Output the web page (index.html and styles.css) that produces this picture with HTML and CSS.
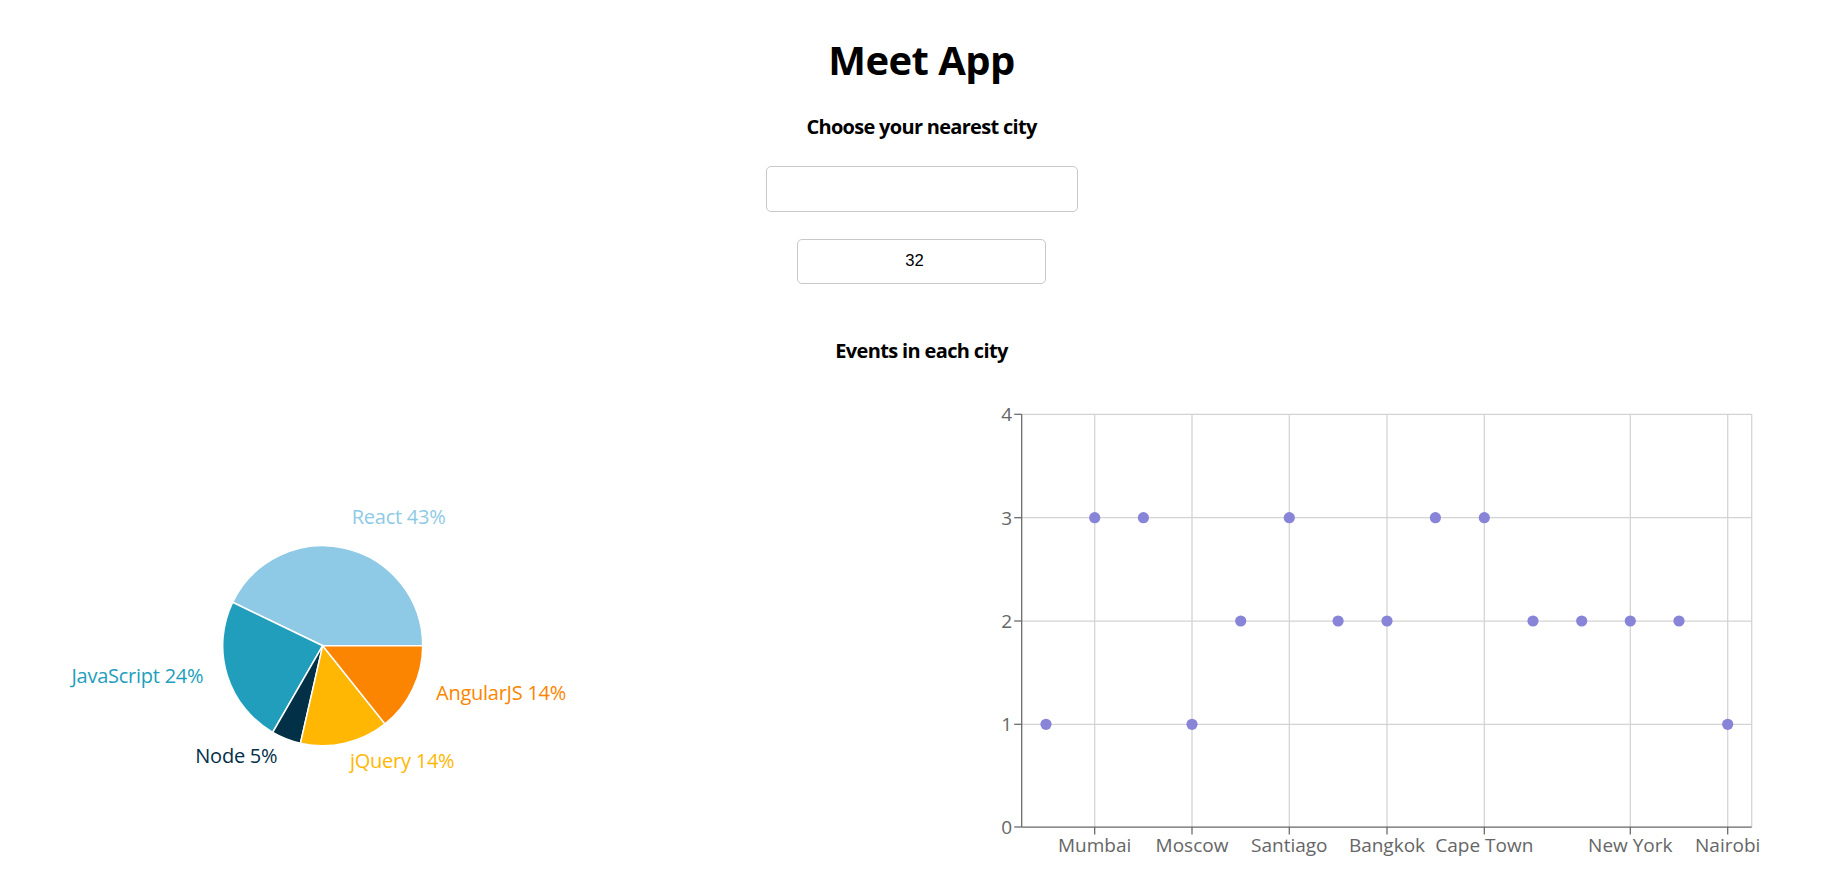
FILE: index.html
```html
<!DOCTYPE html>
<html lang="en">
<head>
<meta charset="utf-8">
<title>Meet App</title>
<link rel="stylesheet" href="styles.css">
</head>
<body>
<div class="app">
  <h1 class="title">Meet App</h1>
  <h4 class="label">Choose your nearest city</h4>
  <input class="city-input" type="text" aria-label="City">
  <input class="number-input" type="text" value="32" aria-label="Number of events">
  <h4 class="label events-label">Events in each city</h4>
</div>
<div class="charts">
  <div class="chart-cell">
    <svg class="chart" width="916" height="482" viewBox="0 394 916 482">
      <g class="pie" stroke="#fff" stroke-width="1.5">
        <path fill="#8ecae6" d="M322.7 645.7 L422.7 645.7 A100 100 0 0 0 232.6 602.3 Z"/>
        <path fill="#219ebc" d="M322.7 645.7 L232.6 602.3 A100 100 0 0 0 272.7 732.3 Z"/>
        <path fill="#023047" d="M322.7 645.7 L272.7 732.3 A100 100 0 0 0 300.45 743.2 Z"/>
        <path fill="#ffb703" d="M322.7 645.7 L300.45 743.2 A100 100 0 0 0 385.05 723.9 Z"/>
        <path fill="#fb8500" d="M322.7 645.7 L385.05 723.9 A100 100 0 0 0 422.7 645.7 Z"/>
      </g>
      <g class="pie-labels">
        <text x="351.7" y="524" fill="#8ecae6">React 43%</text>
        <text x="203.3" y="683.3" fill="#219ebc" text-anchor="end">JavaScript 24%</text>
        <text x="277.3" y="763.3" fill="#023047" text-anchor="end">Node 5%</text>
        <text x="350" y="768.3" fill="#ffb703">jQuery 14%</text>
        <text x="436" y="700" fill="#fb8500">AngularJS 14%</text>
      </g>
    </svg>
  </div>
  <div class="chart-cell">
    <svg class="chart" width="916" height="482" viewBox="916 394 916 482">
      <g class="grid" stroke="#d3d3d3" stroke-width="1.25">
        <line x1="1021.7" y1="414.3" x2="1751.7" y2="414.3"/>
        <line x1="1021.7" y1="517.7" x2="1751.7" y2="517.7"/>
        <line x1="1021.7" y1="621" x2="1751.7" y2="621"/>
        <line x1="1021.7" y1="724.3" x2="1751.7" y2="724.3"/>
        <line x1="1094.7" y1="414.3" x2="1094.7" y2="827"/>
        <line x1="1192" y1="414.3" x2="1192" y2="827"/>
        <line x1="1289.3" y1="414.3" x2="1289.3" y2="827"/>
        <line x1="1387" y1="414.3" x2="1387" y2="827"/>
        <line x1="1484.3" y1="414.3" x2="1484.3" y2="827"/>
        <line x1="1630.3" y1="414.3" x2="1630.3" y2="827"/>
        <line x1="1727.7" y1="414.3" x2="1727.7" y2="827"/>
        <line x1="1751.7" y1="414.3" x2="1751.7" y2="827"/>
      </g>
      <g class="axis" stroke="#666" stroke-width="1.25">
        <line x1="1021.7" y1="414.3" x2="1021.7" y2="827"/>
        <line x1="1021.7" y1="827" x2="1751.7" y2="827"/>
        <line x1="1014.2" y1="414.3" x2="1021.7" y2="414.3"/>
        <line x1="1014.2" y1="517.7" x2="1021.7" y2="517.7"/>
        <line x1="1014.2" y1="621" x2="1021.7" y2="621"/>
        <line x1="1014.2" y1="724.3" x2="1021.7" y2="724.3"/>
        <line x1="1014.2" y1="827" x2="1021.7" y2="827"/>
        <line x1="1094.7" y1="827" x2="1094.7" y2="834.5"/>
        <line x1="1192" y1="827" x2="1192" y2="834.5"/>
        <line x1="1289.3" y1="827" x2="1289.3" y2="834.5"/>
        <line x1="1387" y1="827" x2="1387" y2="834.5"/>
        <line x1="1484.3" y1="827" x2="1484.3" y2="834.5"/>
        <line x1="1630.3" y1="827" x2="1630.3" y2="834.5"/>
        <line x1="1727.7" y1="827" x2="1727.7" y2="834.5"/>
      </g>
      <g class="tick-labels y-labels" text-anchor="end">
        <text x="1012" y="421.3">4</text>
        <text x="1012" y="524.7">3</text>
        <text x="1012" y="628">2</text>
        <text x="1012" y="731.3">1</text>
        <text x="1012" y="834">0</text>
      </g>
      <g class="tick-labels x-labels" text-anchor="middle">
        <text x="1094.7" y="852.3">Mumbai</text>
        <text x="1192" y="852.3">Moscow</text>
        <text x="1289.3" y="852.3">Santiago</text>
        <text x="1387" y="852.3">Bangkok</text>
        <text x="1484.3" y="852.3">Cape Town</text>
        <text x="1630.3" y="852.3">New York</text>
        <text x="1727.7" y="852.3">Nairobi</text>
      </g>
      <g class="dots" fill="#8884d8">
        <circle cx="1046" cy="724.3" r="5.6"/>
        <circle cx="1094.7" cy="517.7" r="5.6"/>
        <circle cx="1143.4" cy="517.7" r="5.6"/>
        <circle cx="1192" cy="724.3" r="5.6"/>
        <circle cx="1240.7" cy="621" r="5.6"/>
        <circle cx="1289.3" cy="517.7" r="5.6"/>
        <circle cx="1338.1" cy="621" r="5.6"/>
        <circle cx="1387" cy="621" r="5.6"/>
        <circle cx="1435.4" cy="517.7" r="5.6"/>
        <circle cx="1484.3" cy="517.7" r="5.6"/>
        <circle cx="1533" cy="621" r="5.6"/>
        <circle cx="1581.7" cy="621" r="5.6"/>
        <circle cx="1630.3" cy="621" r="5.6"/>
        <circle cx="1679" cy="621" r="5.6"/>
        <circle cx="1727.7" cy="724.3" r="5.6"/>
      </g>
    </svg>
  </div>
</div>
</body>
</html>
```

FILE: styles.css
```css
html, body {
  margin: 0;
  padding: 0;
  background: #fff;
  overflow: hidden;
}

body {
  font-family: "Open Sans", "Noto Sans", sans-serif;
  color: #000;
}

.app {
  padding-left: 11px;
  text-align: center;
}

.title {
  margin: 35.5px 0 0;
  font-size: 40px;
  line-height: 48px;
  font-weight: 700;
  letter-spacing: -0.55px;
}

.label {
  margin: 31.7px 0 0;
  font-size: 20px;
  line-height: 24px;
  font-weight: 700;
  letter-spacing: -0.7px;
}

.city-input,
.number-input {
  display: block;
  box-sizing: border-box;
  margin: 0 auto;
  border: 1px solid #c8c8c8;
  border-radius: 5px;
  background: #fff;
  padding: 0 10px;
  font-family: "Liberation Sans", Arial, sans-serif;
  font-size: 16.67px;
  color: #000;
  outline: none;
}

.city-input {
  margin-top: 26.5px;
  width: 312px;
  height: 46.6px;
}

.number-input {
  margin-top: 26.4px;
  width: 249px;
  height: 45.6px;
  padding: 0 24px 0 10px;
  text-align: center;
}

.events-label {
  margin-top: 55.2px;
  letter-spacing: -0.65px;
}

.charts {
  display: flex;
  margin-top: 30.5px;
}

.chart-cell {
  flex: 1 1 0;
}

.chart {
  display: block;
  font-family: "Open Sans", "Noto Sans", sans-serif;
  font-size: 19px;
}

.tick-labels {
  fill: #666;
}

.pie-labels text {
  font-size: 20px;
  letter-spacing: -0.25px;
}
```
